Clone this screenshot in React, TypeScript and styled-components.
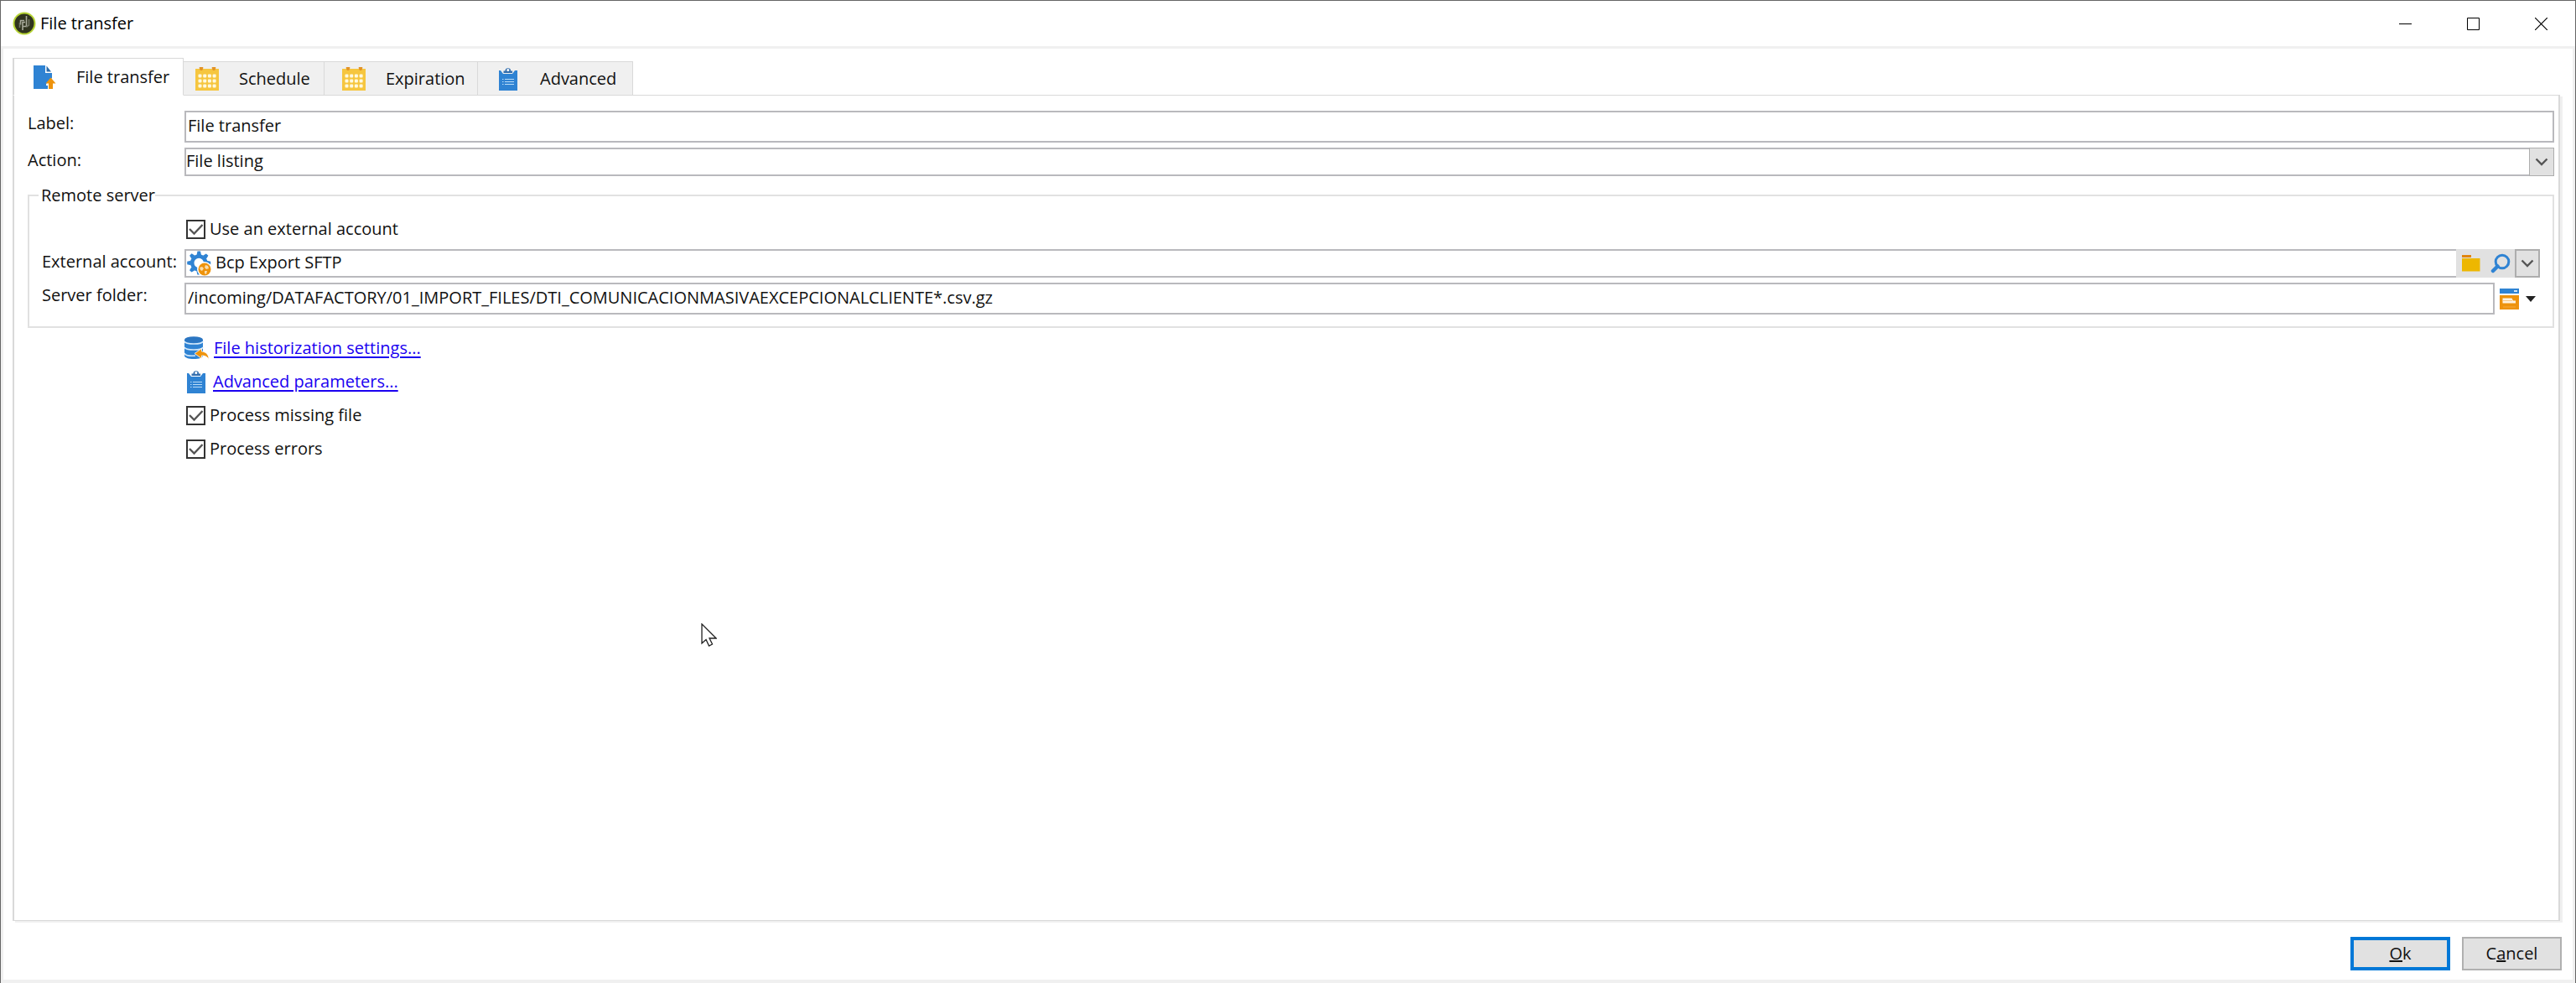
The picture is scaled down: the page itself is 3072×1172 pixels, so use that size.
import React, { useState } from "react";
import styled, { createGlobalStyle } from "styled-components";

const GlobalStyle = createGlobalStyle`
  * { box-sizing: border-box; }
  body { margin: 0; background: #fff; }
  body, button, input, select {
    font-family: "Open Sans", "Noto Sans", sans-serif;
    font-size: 20px;
    line-height: 24px;
    color: #111;
  }
  svg { display: block; flex: none; }
`;

const Window = styled.div`
  min-height: 100vh;
  display: flex;
  flex-direction: column;
  background: #fff;
  border: 1px solid #666;
  border-bottom: 0;
`;

const TitleBar = styled.header`
  display: flex;
  align-items: center;
  height: 54px;
  padding-left: 14px;
`;

const Title = styled.h1`
  flex: 1;
  margin: 0;
  padding-left: 5px;
  font-size: 20px;
  font-weight: 400;
  color: #000;
`;

const WindowButton = styled.button`
  width: 81px;
  height: 54px;
  padding: 0;
  border: 0;
  background: none;
  display: grid;
  place-items: center;
`;

const Frame = styled.main`
  flex: 1;
  display: flex;
  flex-direction: column;
  border: 3px solid #f0f0f0;
  border-bottom-width: 4px;
  padding: 11px 13px 11px 11px;
`;

const Tabs = styled.div`
  display: flex;
  align-items: flex-end;
  position: relative;
  z-index: 1;
  margin-bottom: -1px;
`;

const Tab = styled.button<{ $active: boolean; $width: number; $lead: number }>`
  display: flex;
  align-items: center;
  gap: 24px;
  width: ${(p) => p.$width}px;
  height: ${(p) => (p.$active ? 45 : 41)}px;
  padding: 0 0 0 ${(p) => p.$lead}px;
  border: 1px solid #d9d9d9;
  border-left-width: ${(p) => (p.$active ? 2 : 0)}px;
  border-bottom-color: ${(p) => (p.$active ? "#fff" : "#d9d9d9")};
  background: ${(p) => (p.$active ? "#fff" : "#f0f0f0")};
  white-space: nowrap;
`;

const Panel = styled.section`
  flex: 1;
  margin-right: 2px;
  border: 1px solid #d9d9d9;
  border-left-width: 2px;
  border-right-width: 2px;
  box-shadow: 3px 2px 0 #f0f0f0;
  padding: 18px 5px 18px 16px;
`;

const Row = styled.div<{ $label: number; $gap?: number }>`
  display: grid;
  grid-template-columns: ${(p) => p.$label}px minmax(0, 1fr);
  margin-bottom: ${(p) => p.$gap ?? 6}px;
`;

const FieldLabel = styled.label`
  align-self: start;
  padding-top: 3px;
  white-space: nowrap;
`;

const TextInput = styled.input`
  width: 100%;
  min-width: 0;
  height: 38px;
  padding: 0 2px 4px;
  border: 2px solid #b9b9bd;
  border-radius: 0;
  background: #fff;
`;

const Stack = styled.div`
  display: grid;
  > * { grid-area: 1 / 1; }
`;

const Select = styled.select`
  appearance: none;
  width: 100%;
  height: 34px;
  padding: 0 36px 2px 0;
  border: 2px solid #b9b9bd;
  border-radius: 0;
  background: #fff;
`;

const SelectArrow = styled.span`
  justify-self: end;
  display: grid;
  place-items: center;
  width: 30px;
  height: 34px;
  border: 1px solid #adadad;
  background: #e1e1e1;
  pointer-events: none;
`;

const Group = styled.fieldset`
  min-width: 0;
  margin: 0 0 6px;
  padding: 14px 15px 14px 15px;
  border: 2px solid #e1e1e1;
`;

const Legend = styled.legend`
  margin-left: -4px;
  padding: 0 0 0 3px;
`;

const Check = styled.label<{ $indent: number }>`
  display: flex;
  align-items: center;
  width: max-content;
  height: 28px;
  gap: 5px;
  margin-left: ${(p) => p.$indent}px;
`;

const CheckInput = styled.input`
  appearance: none;
  width: 23px;
  height: 23px;
  margin: 0;
  border: 2px solid #333;
  background: #fff;
  + svg { visibility: hidden; pointer-events: none; }
  &:checked + svg { visibility: visible; }
`;

const AccountFields = styled.div`
  padding-top: 10px;
`;

const AccountBox = styled.div`
  display: flex;
  height: 34px;
  background: #e1e1e1;
`;

const AccountField = styled.div`
  flex: 1;
  display: flex;
  align-items: center;
  border: 2px solid #b9b9bd;
  border-right: 0;
  padding-left: 1px;
  background: #fff;
`;

const AccountInput = styled.input`
  flex: 1;
  min-width: 0;
  height: 28px;
  padding: 0 5px 3px;
  border: 0;
  background: none;
`;

const ToolButton = styled.button<{ $width: number; $boxed?: boolean }>`
  display: flex;
  align-items: center;
  justify-content: center;
  gap: 8px;
  width: ${(p) => p.$width}px;
  padding: 0;
  border: ${(p) => (p.$boxed ? "2px solid #adadad" : "0")};
  background: none;
`;

const FolderRow = styled.div`
  display: flex;
`;

const Options = styled.div`
  display: grid;
  gap: 12px;
  padding: 4px 0 0 187px;
`;

const LinkLine = styled.div`
  display: flex;
  align-items: center;
  gap: 6px;
  height: 28px;
`;

const Link = styled.a`
  color: #1a00f0;
  text-decoration: underline;
  text-decoration-thickness: 2px;
  text-underline-offset: 3px;
`;

const Footer = styled.footer`
  display: flex;
  justify-content: flex-end;
  gap: 14px;
  padding-top: 19px;
`;

const DialogButton = styled.button<{ $primary?: boolean }>`
  width: 119px;
  height: 40px;
  padding: 0;
  border: ${(p) => (p.$primary ? "4px solid #0078d7" : "2px solid #b0b0b0")};
  background: #e1e1e1;
`;

const Pointer = styled.svg`
  position: absolute;
  left: 836px;
  top: 743px;
  pointer-events: none;
`;

const Logo = () => (
  <svg width="28" height="28" viewBox="0 0 28 28">
    <circle cx="14" cy="14" r="12.5" fill="#30341f" stroke="#b5d334" strokeWidth="2" />
    <g fill="none" stroke="#a9ab9c" strokeWidth="1.6">
      <path d="M16.5 5v12.500h-4M14 10.500H9.500v5" />
      <path d="M12 22v-9.500h3" />
      <path d="M8.500 13v6M19.500 9v7l-3 2" stroke="#747766" />
    </g>
  </svg>
);

const FileIcon = () => (
  <svg width="28" height="30" viewBox="0 0 28 30">
    <path d="M1 1h14v9h8v6l-7 7v2h2v4H1z" fill="#2f83d3" />
    <path d="M16.500 1.500v7H22z" fill="#2b6cac" />
    <path d="M21.500 15.500l6 7H24V29h-5v-6.500h-3.500z" fill="#ee930c" />
  </svg>
);

const dots = [0, 1, 2, 3];
const CalendarIcon = () => (
  <svg width="28" height="30" viewBox="0 0 28 30">
    <path d="M0 3h28v26H0z" fill="#f6c63f" />
    <path d="M5 1.500h4l-1 3H6zM20 1.500h4l-1 3h-2z" fill="#e39325" stroke="#e39325" />
    {dots.map((c) =>
      [0, 1, 2].map((r) => (
        <rect key={`${c}-${r}`} x={3.5 + c * 5.7} y={9.5 + r * 6} width="4" height="4" rx="1" fill="#fff9df" />
      )),
    )}
  </svg>
);

const ClipboardIcon = () => (
  <svg width="28" height="30" viewBox="0 0 28 30">
    <path d="M3 5h2l3 4h11l3-4h3v24H3z" fill="#2f83d3" />
    <path d="M8.500 8V5.500h2a3.300 3.300 0 0 1 6.600 0h2V8z" fill="#356fae" />
    <circle cx="13.800" cy="4.500" r="1.500" fill="#fff" />
    <path d="M7 15.500h1.500M10 15.500h11M7 18.500h1.500M10 18.500h11M7 21.500h1.500M10 21.500h11" stroke="#b9dcf8" strokeWidth="1.200" />
  </svg>
);

const teeth = [0, 45, 90, 135, 180, 225, 270, 315];
const GearIcon = () => (
  <svg width="29" height="30" viewBox="0 0 29 30">
    {teeth.map((a) => (
      <path key={a} d="M11.500 5l1-4.500h3.500l1 4.500z" transform={`rotate(${a} 14.200 14.500)`} fill="#2f83d3" />
    ))}
    <circle cx="14.200" cy="14.500" r="8" fill="#fff" stroke="#2f83d3" strokeWidth="4.500" />
    <circle cx="21" cy="22" r="9" fill="#fff" />
    <circle cx="21" cy="22" r="7.500" fill="#ee930c" />
    <path d="M15 20l3-1 2 2-2 3-2-1zM22 17l3 1 1 3-3 1-2-2zM21 24l3 0-1 4-2-1z" fill="#fbdcaa" />
  </svg>
);

const FolderIcon = () => (
  <svg width="22" height="22" viewBox="0 0 22 22">
    <path d="M0 1h11v3H0z" fill="#e1850d" />
    <path d="M0 5h21.500v15.500H0z" fill="#edb700" />
  </svg>
);

const SearchIcon = () => (
  <svg width="24" height="24" viewBox="0 0 24 24" fill="none" stroke="#2f83d3">
    <circle cx="14" cy="10" r="7.800" strokeWidth="3" />
    <path d="M8.500 15.500L3 21" strokeWidth="4.500" strokeLinecap="round" />
  </svg>
);

const Chevron = () => (
  <svg width="16" height="10" viewBox="0 0 16 10" fill="none" stroke="#555" strokeWidth="2.400">
    <path d="M1.500 1.500L8 8l6.500-6.500" />
  </svg>
);

const FormIcon = () => (
  <svg width="23" height="25" viewBox="0 0 23 25">
    <path d="M0 0h23v6H0z" fill="#2f83d3" />
    <path d="M17 3h4" stroke="#cfe6fa" strokeWidth="2" />
    <path d="M0 8h23v17H0z" fill="#ee930c" />
    <path d="M3.500 11.500h11l1.500 3h3v3h-15.500z" fill="#fff3df" />
    <path d="M4 14.500h11" stroke="#f6c98a" />
    <path d="M4 22h15" stroke="#f6a93b" />
  </svg>
);

const DatabaseIcon = () => (
  <svg width="29" height="28" viewBox="0 0 29 28">
    <path d="M0 4v19c0 2.500 5 4 11 4s11-1.500 11-4V4z" fill="#2f83d3" />
    <ellipse cx="11" cy="4" rx="11" ry="3.800" fill="#2b76c2" />
    <path d="M0 6c1 4 21 4 22 0M0 13c1 4 21 4 22 0M0 20c1 3.500 8 3.500 13 3" fill="none" stroke="#d5e9fa" strokeWidth="1.700" />
    <path d="M12 20.500l8.500-6v3.500c5 .5 8.500 3.500 8.500 9.500-2-3.500-4.500-4.500-8.500-4.500v3.500z" fill="#ee930c" stroke="#fff" strokeWidth=".8" />
  </svg>
);

function CheckField({ label, indent = 2 }: { label: string; indent?: number }) {
  return (
    <Check $indent={indent}>
      <Stack>
        <CheckInput type="checkbox" defaultChecked />
        <svg width="23" height="23" viewBox="0 0 23 23">
          <path d="M4 11l5.500 5.500L19.500 6" fill="none" stroke="#555" strokeWidth="2.400" />
        </svg>
      </Stack>
      {label}
    </Check>
  );
}

const tabs = [
  { name: "File transfer", Icon: FileIcon, width: 204, lead: 22 },
  { name: "Schedule", Icon: CalendarIcon, width: 168, lead: 14 },
  { name: "Expiration", Icon: CalendarIcon, width: 183, lead: 21 },
  { name: "Advanced", Icon: ClipboardIcon, width: 185, lead: 22 },
];

export default function App() {
  const [active, setActive] = useState(0);
  return (
    <Window>
      <GlobalStyle />
      <TitleBar>
        <Logo />
        <Title>File transfer</Title>
        <WindowButton aria-label="Minimize">
          <svg width="15" height="15"><path d="M0 7.500h15" stroke="#000" /></svg>
        </WindowButton>
        <WindowButton aria-label="Maximize">
          <svg width="15" height="15"><path d="M.5.5h14v14H.5z" fill="none" stroke="#000" /></svg>
        </WindowButton>
        <WindowButton aria-label="Close">
          <svg width="15" height="15"><path d="M0 0l15 15M15 0L0 15" stroke="#000" strokeWidth="1.200" /></svg>
        </WindowButton>
      </TitleBar>
      <Frame>
        <Tabs role="tablist">
          {tabs.map(({ name, Icon, width, lead }, i) => (
            <Tab
              key={name}
              role="tab"
              aria-selected={i === active}
              $active={i === active}
              $width={width}
              $lead={lead}
              onClick={() => setActive(i)}
            >
              <Icon />
              {name}
            </Tab>
          ))}
        </Tabs>
        <Panel role="tabpanel">
          <Row $label={187}>
            <FieldLabel htmlFor="label">Label:</FieldLabel>
            <TextInput id="label" defaultValue="File transfer" />
          </Row>
          <Row $label={187} $gap={11}>
            <FieldLabel htmlFor="action">Action:</FieldLabel>
            <Stack>
              <Select id="action">
                <option>File listing</option>
              </Select>
              <SelectArrow><Chevron /></SelectArrow>
            </Stack>
          </Row>
          <Group>
            <Legend>Remote server</Legend>
            <CheckField label="Use an external account" indent={172} />
            <AccountFields>
              <Row $label={170}>
                <FieldLabel htmlFor="account">External account:</FieldLabel>
                <AccountBox>
                  <AccountField>
                    <GearIcon />
                    <AccountInput id="account" defaultValue="Bcp Export SFTP" />
                  </AccountField>
                  <ToolButton $width={35} aria-label="Open folder"><FolderIcon /></ToolButton>
                  <ToolButton $width={35} aria-label="Search"><SearchIcon /></ToolButton>
                  <ToolButton $width={30} $boxed aria-label="Show accounts"><Chevron /></ToolButton>
                </AccountBox>
              </Row>
              <Row $label={170} $gap={0}>
                <FieldLabel htmlFor="folder">Server folder:</FieldLabel>
                <FolderRow>
                  <TextInput
                    id="folder"
                    defaultValue="/incoming/DATAFACTORY/01_IMPORT_FILES/DTI_COMUNICACIONMASIVAEXCEPCIONALCLIENTE*.csv.gz"
                  />
                  <ToolButton $width={55} aria-label="Insert field">
                    <FormIcon />
                    <svg width="12" height="7"><path d="M0 0h12L6 7z" fill="#222" /></svg>
                  </ToolButton>
                </FolderRow>
              </Row>
            </AccountFields>
          </Group>
          <Options>
            <LinkLine><DatabaseIcon /><Link href="#history">File historization settings...</Link></LinkLine>
            <LinkLine><ClipboardIcon /><Link href="#advanced">Advanced parameters...</Link></LinkLine>
            <CheckField label="Process missing file" />
            <CheckField label="Process errors" />
          </Options>
        </Panel>
        <Footer>
          <DialogButton $primary><u>O</u>k</DialogButton>
          <DialogButton>C<u>a</u>ncel</DialogButton>
        </Footer>
      </Frame>
      <Pointer width="19" height="28" viewBox="0 0 19 28">
        <path d="M1 1v23l5-4.500 3.500 7.500 4-2-3.500-7h8z" fill="#fff" stroke="#222" strokeWidth="1.300" />
      </Pointer>
    </Window>
  );
}
